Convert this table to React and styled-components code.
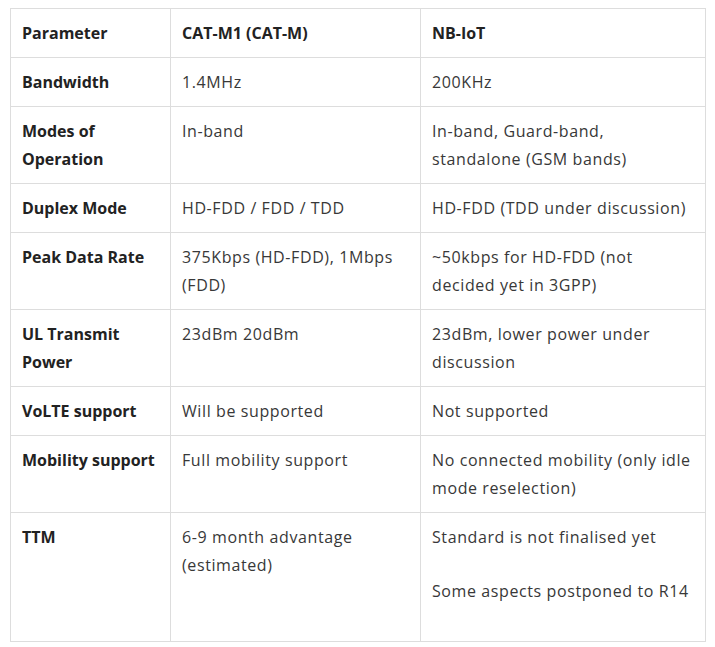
import React from "react"
import styled, {createGlobalStyle} from "styled-components"

const GlobalStyle = createGlobalStyle`
	body {
		margin: 0;
		background: #fff;
		font-family: "Open Sans", "Liberation Sans", sans-serif;
	}
`

const rows = [
	{name: "Bandwidth", catm: ["1.4MHz"], nb: ["200KHz"]},
	{name: ["Modes of", "Operation"], catm: ["In-band"], nb: [["In-band, Guard-band,", "standalone (GSM bands)"]]},
	{name: "Duplex Mode", catm: ["HD-FDD / FDD / TDD"], nb: ["HD-FDD (TDD under discussion)"]},
	{name: "Peak Data Rate", catm: [["375Kbps (HD-FDD), 1Mbps", "(FDD)"]], nb: [["~50kbps for HD-FDD (not", "decided yet in 3GPP)"]]},
	{name: ["UL Transmit", "Power"], catm: ["23dBm 20dBm"], nb: [["23dBm, lower power under", "discussion"]]},
	{name: "VoLTE support", catm: ["Will be supported"], nb: ["Not supported"]},
	{name: "Mobility support", catm: ["Full mobility support"], nb: [["No connected mobility (only idle", "mode reselection)"]]},
	{name: "TTM", catm: [["6-9 month advantage", "(estimated)"]], nb: ["Standard is not finalised yet", "Some aspects postponed to R14"], paras: true},
]

const Lines = ({text}) => {
	if (!Array.isArray(text)) return text
	return text.map((t, i) => (
		<React.Fragment key={i}>
			{i > 0 && <br/>}
			{t}
		</React.Fragment>
	))
}

const Cell = ({items, paras}) => {
	if (paras) {
		return items.map((t, i) => <Para key={i}><Lines text={t}/></Para>)
	}
	return <Lines text={items[0]}/>
}

const App = () => {
	return (
		<>
			<GlobalStyle/>
			<Page>
				<Table>
					<colgroup>
						<col style={{width: 160}}/>
						<col style={{width: 250}}/>
						<col/>
					</colgroup>
					<thead>
						<tr>
							<Head>Parameter</Head>
							<Head>CAT-M1 (CAT-M)</Head>
							<Head>NB-IoT</Head>
						</tr>
					</thead>
					<tbody>
						{rows.map((r) => (
							<tr key={String(r.name)}>
								<Label><Lines text={r.name}/></Label>
								<Data><Cell items={r.catm} paras={r.paras}/></Data>
								<Data><Cell items={r.nb} paras={r.paras}/></Data>
							</tr>
						))}
					</tbody>
				</Table>
			</Page>
		</>
	)
}

export default App

const Page = styled.div`
	padding: 8px 9px 0 10px;
`
const Table = styled.table`
	width: 696px;
	border-collapse: collapse;
	table-layout: fixed;
	font-size: 16px;
	line-height: 28px;
`
const cellBase = `
	border: 1px solid #dddddd;
	padding: 10px 11px;
	text-align: left;
	vertical-align: top;
	white-space: nowrap;
`
const Head = styled.th`
	${cellBase};
	font-weight: 700;
	color: #222;
`
const Label = styled.td`
	${cellBase};
	font-weight: 700;
	color: #222;
`
const Data = styled.td`
	${cellBase};
	color: #383838;
	letter-spacing: 0.6px;
`
const Para = styled.p`
	margin: 0 0 26px;
`
